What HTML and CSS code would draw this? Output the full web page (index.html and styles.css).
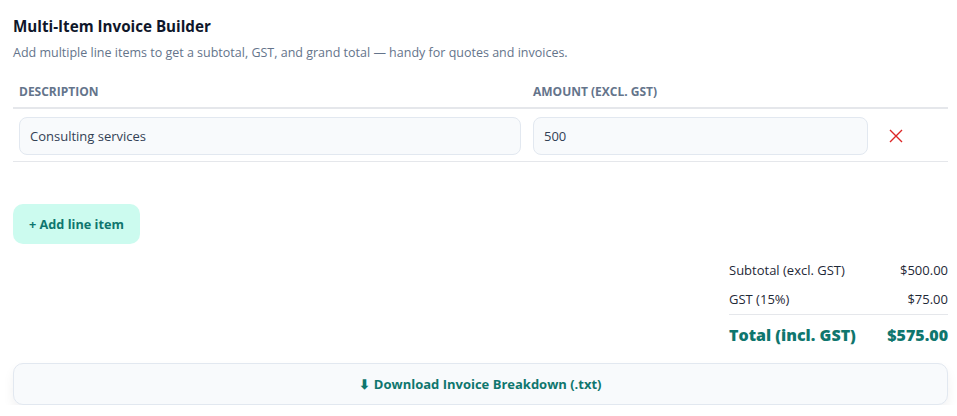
FILE: index.html
```html
<!DOCTYPE html>
<html lang="en">
<head>
    <title>Multi-Item Invoice Builder</title>
    <link rel="stylesheet" href="styles.css">
</head>
<body>
    <div class="builder">
        <h2>Multi-Item Invoice Builder</h2>
        <p class="intro">Add multiple line items to get a subtotal, GST, and grand total — handy for quotes and invoices.</p>

        <table class="items">
            <thead>
                <tr>
                    <th class="col-desc">Description</th>
                    <th class="col-amount">Amount (excl. GST)</th>
                    <th class="col-del"></th>
                </tr>
            </thead>
            <tbody>
                <tr>
                    <td><input type="text" class="field" value="Consulting services"></td>
                    <td><input type="text" class="field" value="500"></td>
                    <td>
                        <button class="remove" title="Remove">
                            <svg width="16" height="16" viewBox="0 0 16 16"><path d="M2 2L14 14M14 2L2 14" stroke="#dc2626" stroke-width="1.4" fill="none"/></svg>
                        </button>
                    </td>
                </tr>
            </tbody>
        </table>

        <button class="add">+ Add line item</button>

        <div class="summary">
            <div class="line"><span>Subtotal (excl. GST)</span><span>$500.00</span></div>
            <div class="line"><span>GST (15%)</span><span>$75.00</span></div>
            <div class="line total"><span>Total (incl. GST)</span><span>$575.00</span></div>
        </div>

        <button class="download">⬇ Download Invoice Breakdown (.txt)</button>
    </div>
</body>
</html>
```

FILE: styles.css
```css
body {
    font-family: 'Open Sans', 'Noto Sans', sans-serif;
    margin: 0;
    padding: 0;
    background: #ffffff;
    color: #111827;
}
.builder {
    width: 935px;
    padding: 15px 0 0 13px;
}
h2 {
    font-size: 15.2px;
    font-weight: 700;
    margin: 0;
    line-height: 22px;
    color: #0f172a;
}
.intro {
    font-size: 12.5px;
    color: #64748b;
    margin: 7px 0 0;
    line-height: 18px;
}
.items {
    width: 100%;
    border-collapse: collapse;
    margin-top: 14px;
}
.items th {
    text-align: left;
    font-size: 12px;
    font-weight: 700;
    color: #64748b;
    text-transform: uppercase;
    padding: 8px 6px 7px;
    border-bottom: 2px solid #e5e7eb;
    line-height: 16px;
}
.col-desc { width: 502px; }
.col-amount { width: 335px; }
.items td {
    padding: 8px 6px 6px;
    border-bottom: 1px solid #e5e7eb;
}
.field {
    box-sizing: border-box;
    width: 100%;
    height: 38px;
    padding: 0 10px;
    font-family: inherit;
    font-size: 13px;
    font-weight: 500;
    color: #334155;
    background: #f8fafc;
    border: 1px solid #e2e8f0;
    border-radius: 8px;
}
.remove {
    background: none;
    border: none;
    padding: 4px 8px;
    cursor: pointer;
    display: flex;
}
.add {
    margin-top: 42px;
    height: 40px;
    padding: 0 16px;
    background: #ccfbef;
    color: #0f766e;
    font-family: inherit;
    font-size: 12.7px;
    font-weight: 700;
    border: none;
    border-radius: 10px;
    cursor: pointer;
}
.summary {
    width: 219px;
    margin: 12px 0 0 auto;
    font-size: 13px;
    color: #1f2937;
}
.line {
    display: flex;
    justify-content: space-between;
    line-height: 18px;
    padding: 5px 0;
}
.line + .line {
    margin-top: 1px;
}
.total {
    margin-top: 6px;
    padding-top: 11px;
    border-top: 1px solid #e5e7eb;
    font-size: 16px;
    font-weight: 800;
    color: #0f766e;
}
.download {
    display: block;
    box-sizing: border-box;
    width: 935px;
    height: 42px;
    margin-top: 14px;
    background: #f8fafc;
    border: 1px solid #e2e8f0;
    border-radius: 10px;
    box-shadow: 0 6px 12px rgba(15, 23, 42, 0.06);
    color: #0f766e;
    font-family: inherit;
    font-size: 13px;
    font-weight: 700;
    cursor: pointer;
}
```
